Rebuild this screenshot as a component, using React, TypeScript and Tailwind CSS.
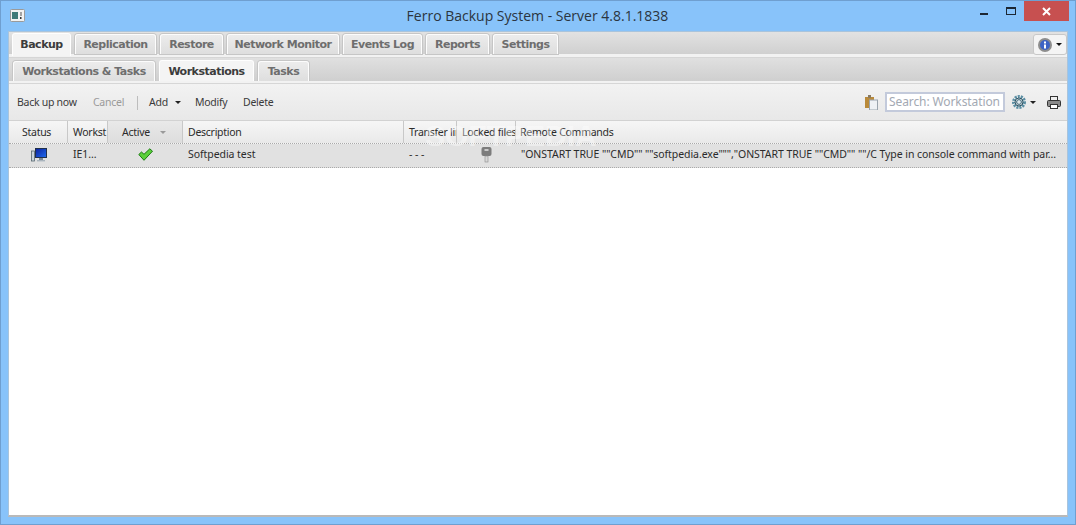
import React from "react";

const UI = "font-['Noto_Sans',sans-serif]";

function Tab({ label, active, w }: { label: string; active?: boolean; w: string }) {
  return (
    <div
      className={`${w} flex items-center justify-center rounded-t-[3px] border border-b-0 border-white/90 font-['DejaVu_Sans',sans-serif] text-[11px] font-bold tracking-[-0.5px] ${
        active ? "h-[23px] -mb-[2px] bg-[#f4f4f4] text-[#3c3c3c]" : "h-[20px] pt-[1px] bg-gradient-to-b from-[#ececec] to-[#dedede] text-[#6e6e6e] shadow-[0_0_0_1px_#c6c6c6]"
      }`}
    >
      {label}
    </div>
  );
}

function Head({ w, label, center }: { w: string; label: string; center?: boolean }) {
  return (
    <div
      className={`${w} shrink-0 h-full pt-[1px] flex items-center overflow-hidden whitespace-nowrap border-r border-[#c8c8c8] ${
        center ? "pl-[13px]" : "pl-[5px]"
      }`}
    >
      {label}
    </div>
  );
}

function Caret({ color = "#222" }: { color?: string }) {
  return (
    <svg width="6" height="3" viewBox="0 0 6 3" className="shrink-0">
      <path d="M0 0h6L3 3z" fill={color} />
    </svg>
  );
}

export default function App() {
  return (
    <div className={`${UI} w-[1076px] h-[525px] overflow-hidden bg-[#88c3fa] border border-[#6f9fd0] flex flex-col`}>
      <div className="relative h-[30px] shrink-0 flex items-center pl-[9px]">
        <svg width="15" height="13" viewBox="0 0 15 13" className="mb-[2px]">
          <rect x=".5" y=".5" width="14" height="12" rx="1" fill="#f2f2f2" stroke="#9a9a9a" />
          <rect x="2" y="3" width="6" height="7" fill="#3f7a78" />
          <rect x="10" y="8" width="1.5" height="2" fill="#333" />
          <rect x="10.5" y="3" width="1" height="4" fill="#555" />
        </svg>
        <div className="absolute left-0 right-0 top-[5px] text-center text-[14px] leading-[20px] text-[#2b3540] font-['Open_Sans',sans-serif] pr-[1px]">
          Ferro Backup System - Server 4.8.1.1838
        </div>
        <div className="absolute right-[6px] top-0 flex items-start">
          <div className="w-[8px] h-[2px] bg-[#1c2733] mt-[12px] mr-[18px]" />
          <div className="w-[8px] h-[5px] border border-[#1c2733] border-t-2 mt-[6px] mr-[8px] box-content" />
          <div className="w-[45px] h-[20px] bg-[#c75050] flex items-center justify-center">
            <svg width="9" height="9" viewBox="0 0 9 9">
              <path d="M1 1l7 7M8 1l-7 7" stroke="#fff" strokeWidth="2" />
            </svg>
          </div>
        </div>
      </div>

      <div className="mx-[7px] h-[486px] flex flex-col bg-white border-l border-r border-t border-b-2 border-[#a9c4dc] border-b-[#b9b9b9] text-[10.5px] tracking-[-0.27px] text-[#2f2f2f]">
        <div className="h-[22px] shrink-0 flex items-end gap-[4px] pl-[3px] bg-gradient-to-b from-[#e2e2e2] to-[#d0d0d0] relative">
          <Tab label="Backup" active w="w-[59px]" />
          <Tab label="Replication" w="w-[81px]" />
          <Tab label="Restore" w="w-[63px]" />
          <Tab label="Network Monitor" w="w-[112px]" />
          <Tab label="Events Log" w="w-[79px]" />
          <Tab label="Reports" w="w-[63px]" />
          <Tab label="Settings" w="w-[65px]" />
          <div className="ml-auto mb-[-1px] w-[34px] h-[21px] rounded-[3px] border border-[#c8c8c8] bg-[#f4f4f4] flex items-center justify-center gap-[4px]">
            <svg width="14" height="14" viewBox="0 0 14 14">
              <circle cx="7" cy="7" r="6" fill="#3d63c4" stroke="#8d8d8d" strokeWidth="2" />
              <rect x="6" y="3.5" width="2" height="2" fill="#fff" />
              <rect x="6" y="6.5" width="2" height="4" fill="#fff" />
            </svg>
            <Caret color="#111" />
          </div>
        </div>
        <div className="h-[4px] shrink-0 bg-[#f2f2f2] border-b border-[#d6d6d6]" />
        <div className="h-[23px] shrink-0 flex items-end gap-[4px] pl-[4px] bg-gradient-to-b from-[#e0e0e0] to-[#cfcfcf]">
          <Tab label="Workstations & Tasks" w="w-[142px]" />
          <Tab label="Workstations" active w="w-[95px]" />
          <Tab label="Tasks" w="w-[51px]" />
        </div>
        <div className="h-[3px] shrink-0 bg-[#f2f2f2] border-b border-[#d6d6d6]" />

        <div className="h-[37px] shrink-0 pt-[1px] flex items-center bg-gradient-to-b from-[#f2f2f2] to-[#e8e8e8] border-b border-[#d2d2d2] pl-[8px] pr-[6px] text-[#3a3a3a]">
          <span className="w-[60px] whitespace-nowrap">Back up now</span>
          <span className="ml-[16px] w-[33px] text-[#9a9a9a]">Cancel</span>
          <span className="ml-[11px] w-px h-[14px] bg-[#bdbdbd]" />
          <span className="ml-[11px] w-[18px]">Add</span>
          <span className="ml-[8px]"><Caret /></span>
          <span className="ml-[14px] w-[32px]">Modify</span>
          <span className="ml-[16px]">Delete</span>
          <div className="ml-auto flex items-center -mt-[1px]">
            <svg width="13" height="15" viewBox="0 0 13 15">
              <rect x="0" y="2" width="9" height="11" fill="#b98a3a" />
              <rect x="3" y="0" width="3" height="3" fill="#8a7a60" />
              <rect x="4.5" y="5" width="8" height="10" fill="#eef1f4" stroke="#9aa4ad" />
            </svg>
            <div className="ml-[7px] w-[120px] h-[20px] bg-white border-2 border-[#c3cadb] pl-[2px] flex items-center text-[12px] tracking-[-0.1px] text-[#a3a9b3] whitespace-nowrap overflow-hidden">
              Search: Workstation
            </div>
            <svg width="14" height="14" viewBox="0 0 14 14" className="ml-[7px]">
              <circle cx="7" cy="7" r="5.5" fill="none" stroke="#5a8ea3" strokeWidth="3" strokeDasharray="2 1" />
              <circle cx="7" cy="7" r="4" fill="none" stroke="#2f5566" strokeWidth="1" />
              <circle cx="7" cy="7" r="2.4" fill="#dfe8ec" stroke="#3b6678" />
            </svg>
            <span className="ml-[4px]"><Caret /></span>
            <svg width="14" height="13" viewBox="0 0 14 13" className="ml-[11px]">
              <rect x="3.5" y=".5" width="7" height="5" fill="#eee" stroke="#333" />
              <rect x=".5" y="4.5" width="13" height="6" rx="1" fill="#8a8a8a" stroke="#333" />
              <rect x="3.5" y="8.5" width="7" height="4" fill="#fff" stroke="#333" />
            </svg>
          </div>
        </div>

        <div className="relative">
          <div className="h-[23px] flex items-center bg-gradient-to-b from-[#f6f6f6] to-[#e9e9e9] text-[#2b2b2b] border-b border-dotted border-[#aaaaaa]">
            <Head w="w-[59px]" label="Status" center />
            <Head w="w-[40px]" label="Workst" />
            <div className="w-[75px] shrink-0 h-full pt-[1px] flex items-center border-r border-[#c8c8c8] pl-[14px] bg-gradient-to-b from-[#e9e9e9] to-[#dddddd]">
              Active
              <span className="ml-[10px]"><Caret color="#9a9a9a" /></span>
            </div>
            <Head w="w-[221px]" label="Description" />
            <Head w="w-[53px]" label="Transfer limit" />
            <Head w="w-[59px]" label="Locked files" />
            <div className="flex-1 h-full pt-[1px] flex items-center pl-[4px] whitespace-nowrap">Remote Commands</div>
          </div>

          <div className="h-[24px] pb-[2px] flex items-center bg-[#e1e1e1] border-b border-dotted border-[#aaaaaa] text-[#2b2b2b] tracking-[-0.06px] whitespace-nowrap">
            <div className="w-[59px] shrink-0 flex justify-center pl-[1px]">
              <svg width="16" height="14" viewBox="0 0 16 14">
                <defs>
                  <linearGradient id="scr" x1="0" y1="0" x2="1" y2="1">
                    <stop offset="0" stopColor="#0a1f9c" />
                    <stop offset="1" stopColor="#1f6cf0" />
                  </linearGradient>
                </defs>
                <rect x=".5" y="3" width="3" height="10" fill="#c9d3da" stroke="#56666f" strokeWidth=".8" />
                <rect x="4.5" y=".5" width="11" height="9" fill="url(#scr)" stroke="#20304a" />
                <rect x="8" y="10" width="4" height="2" fill="#7c8a96" />
                <rect x="6" y="12" width="8" height="1.4" fill="#a9b4bd" />
              </svg>
            </div>
            <div className="w-[40px] shrink-0 pl-[5px]">IE1...</div>
            <div className="w-[75px] shrink-0 flex justify-center pr-[1px]">
              <svg width="15" height="13" viewBox="0 0 15 13">
                <path d="M.8 6.5L3.5 4L6 6.3L11.8.8L14.5 3.2L6 12.3Z" fill="#5bd03a" stroke="#1d7a14" strokeLinejoin="round" />
              </svg>
            </div>
            <div className="w-[221px] shrink-0 pl-[5px]">Softpedia test</div>
            <div className="w-[53px] shrink-0 pl-[5px]">- - -</div>
            <div className="w-[59px] shrink-0 flex justify-center pr-[1px]">
              <svg width="11" height="16" viewBox="0 0 11 16">
                <rect x=".5" y="0" width="10" height="9" rx="2" fill="#7c7c7c" />
                <rect x="3.5" y="2" width="4" height="2" fill="#c9c9c9" />
                <rect x="4" y="9" width="3" height="6" fill="#d8d8d8" stroke="#8a8a8a" strokeWidth=".6" />
              </svg>
            </div>
            <div className="flex-1 min-w-0 pl-[5px] overflow-hidden">
              "ONSTART TRUE ""CMD"" ""softpedia.exe""","ONSTART TRUE ""CMD"" ""/C Type in console command with par...
            </div>
          </div>

          <div className="absolute left-[416px] top-0 text-[30px] leading-[30px] font-bold text-white/40 tracking-normal pointer-events-none font-['Liberation_Sans',sans-serif]">
            SOFTPEDIA
          </div>
        </div>
        <div className="flex-1 bg-white" />
      </div>
    </div>
  );
}
